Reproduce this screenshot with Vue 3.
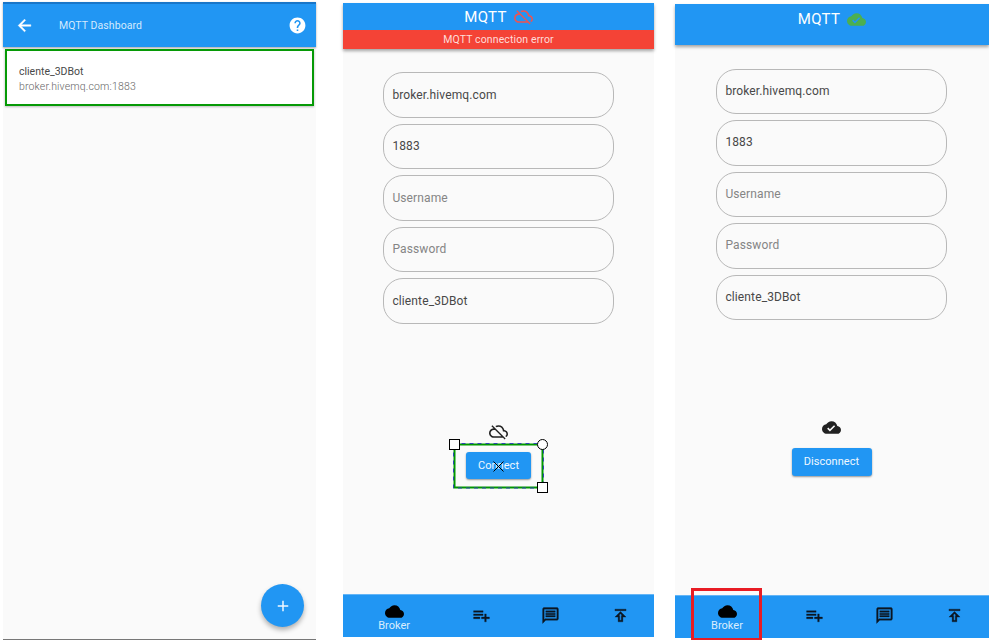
<script setup>
const cloud = 'M19.35 10.04C18.67 6.59 15.64 4 12 4 9.11 4 6.6 5.64 5.35 8.04 2.34 8.36 0 10.91 0 14c0 3.31 2.69 6 6 6h13c2.76 0 5-2.24 5-5 0-2.64-2.05-4.78-4.65-4.96z'
const icons = {
  back: 'M20 11H7.83l5.59-5.59L12 4l-8 8 8 8 1.41-1.41L7.83 13H20v-2z',
  help: 'M12 2C6.48 2 2 6.48 2 12s4.48 10 10 10 10-4.48 10-10S17.52 2 12 2zm1 17h-2v-2h2v2zm2.07-7.75l-.9.92C13.45 12.9 13 13.5 13 15h-2v-.5c0-1.1.45-2.1 1.17-2.83l1.24-1.26c.37-.36.59-.86.59-1.41 0-1.1-.9-2-2-2s-2 .9-2 2H8c0-2.21 1.79-4 4-4s4 1.79 4 4c0 .88-.36 1.68-.93 2.25z',
  add: 'M19 13h-6v6h-2v-6H5v-2h6V5h2v6h6v2z',
  cloud,
  cloudDone: cloud + 'M10 17l-3.5-3.5 1.41-1.41L10 14.17 15.18 9l1.41 1.41L10 17z',
  cloudOff: 'M19.35 10.04C18.67 6.59 15.64 4 12 4c-1.48 0-2.85.43-4.01 1.17l1.46 1.46C10.21 6.23 11.08 6 12 6c3.04 0 5.5 2.46 5.5 5.5v.5H19c1.66 0 3 1.34 3 3 0 1.13-.64 2.11-1.56 2.62l1.45 1.45C23.16 18.16 24 16.68 24 15c0-2.64-2.05-4.78-4.65-4.96zM3 5.27l2.75 2.74C2.56 8.15 0 10.77 0 14c0 3.31 2.69 6 6 6h11.73l2 2L21 20.73 4.27 4 3 5.27zM7.73 10l8 8H6c-2.21 0-4-1.79-4-4s1.79-4 4-4h1.73z',
  playlist: 'M14 10H2v2h12v-2zm0-4H2v2h12V6zm4 8v-4h-2v4h-4v2h4v4h2v-4h4v-2h-4zM2 16h8v-2H2v2z',
  message: 'M4 4h16v12H5.17L4 17.17V4m0-2c-1.1 0-1.99.9-1.99 2L2 22l4-4h14c1.1 0 2-.9 2-2V4c0-1.1-.9-2-2-2H4zm2 10h12v2H6v-2zm0-3h12v2H6V9zm0-3h12v2H6V6z',
  publish: 'M5 4h14v2H5V4zm0 10h4v6h6v-6h4l-7-7-7 7zm8-2v6h-2v-6H9.83L12 9.83 14.17 12H13z',
}
const fields = [
  { text: 'broker.hivemq.com', cls: 'host' },
  { text: '1883', cls: 'port' },
  { text: 'Username', cls: 'hint' },
  { text: 'Password', cls: 'hint' },
  { text: 'cliente_3DBot', cls: 'client' },
]
const phones = [
  { id: 'offline', icon: 'cloudOff', error: 'MQTT connection error', action: 'Connect' },
  { id: 'online', icon: 'cloudDone', error: '', action: 'Disconnect' },
]
const tabs = ['playlist', 'message', 'publish']
</script>

<template>
  <main class="board">
    <section class="phone list">
      <header class="topbar">
        <svg class="icon back" viewBox="0 0 24 24"><path :d="icons.back" /></svg>
        <span class="heading">MQTT Dashboard</span>
        <svg class="icon" viewBox="0 0 24 24"><path :d="icons.help" /></svg>
      </header>
      <article class="broker">
        <div class="name">cliente_3DBot</div>
        <div class="address">broker.hivemq.com:1883</div>
      </article>
      <button class="fab"><svg class="icon" viewBox="0 0 24 24"><path :d="icons.add" /></svg></button>
    </section>

    <section v-for="p in phones" :key="p.id" class="phone" :class="p.id">
      <header class="appbar">
        <div class="title">
          <span class="brand">MQTT</span>
          <svg class="icon status" viewBox="0 0 24 24"><path :d="icons[p.icon]" fill-rule="evenodd" /></svg>
        </div>
        <div v-if="p.error" class="error"><span>{{ p.error }}</span></div>
      </header>
      <div class="form">
        <div v-for="f in fields" :key="f.text" class="field"><span :class="f.cls">{{ f.text }}</span></div>
      </div>
      <div class="connection">
        <svg class="icon" viewBox="0 0 24 24"><path :d="icons[p.icon]" fill-rule="evenodd" /></svg>
        <div class="action">
          <button>{{ p.action }}</button>
          <svg v-if="p.id === 'offline'" class="selection" viewBox="0 0 100 56">
            <rect x="5.5" y="5.5" width="88" height="43" fill="none" stroke="#009600" stroke-width="2" />
            <rect x="4.5" y="4.5" width="90" height="44.5" fill="none" stroke="#3045b5" stroke-dasharray="4 4" />
            <rect x="0.5" y="0.5" width="10" height="10" fill="#fff" stroke="#000" />
            <circle cx="93.5" cy="5.5" r="5" fill="#fff" stroke="#000" />
            <rect x="88.5" y="43.5" width="10" height="10" fill="#fff" stroke="#000" />
            <path d="M44.5 22.5l10 10M54.5 22.5l-10 10" stroke="#000" fill="none" />
          </svg>
        </div>
      </div>
      <nav>
        <div class="tab current">
          <svg class="icon" viewBox="0 0 24 24"><path :d="icons.cloud" /></svg>
          <span>Broker</span>
        </div>
        <div v-for="t in tabs" :key="t" class="tab">
          <svg class="icon" viewBox="0 0 24 24"><path :d="icons[t]" /></svg>
        </div>
        <i v-if="p.id === 'online'" class="marker"></i>
      </nav>
    </section>
  </main>
</template>

<style>
body { margin: 0; background: #fff; overflow: hidden; }
</style>

<style scoped>
* { box-sizing: border-box; }
.board {
  display: flex;
  align-items: flex-start;
  width: 989px;
  height: 640px;
  padding-left: 3px;
  overflow: hidden;
  font-family: Roboto, "Liberation Sans", sans-serif;
  font-size: 12px;
  color: #484848;
}
.phone { position: relative; display: flex; flex-direction: column; flex: none; background: #fafafa; }
.icon { display: block; width: 19px; height: 19px; flex: none; fill: currentColor; }
button { border: 0; padding: 0; font: inherit; color: #f0f8ff; background: #2196f3; }

.list { width: 313px; height: 638px; margin-top: 2px; border-bottom: 1px solid #777; }
.topbar {
  display: flex;
  align-items: center;
  height: 45px;
  padding: 0 9px 0 12px;
  color: #fff;
  background: #2196f3;
  border-top: 2px solid #1976c8;
  box-shadow: 0 1px 2px rgba(0, 0, 0, .35);
}
.back { stroke: currentColor; stroke-width: .6; }
.heading { flex: 1; margin-left: 25px; font-size: 10.5px; letter-spacing: .08px; color: #d3eafd; }
.broker {
  position: relative;
  height: 57px;
  margin: 2px 2px 0;
  padding: 13px 12px;
  background: #fff;
  border: 2px solid #069a06;
  box-shadow: 0 1px 2px rgba(0, 0, 0, .25);
}
.name { font-size: 10.5px; line-height: 15px; }
.address { font-size: 10.5px; line-height: 15px; letter-spacing: .16px; font-weight: 300; color: #666; }
.fab {
  display: grid;
  place-items: center;
  width: 43px;
  height: 43px;
  margin: auto 12px 12px auto;
  border-radius: 50%;
  box-shadow: 0 3px 5px rgba(0, 0, 0, .3);
}
.fab .icon { width: 18px; height: 18px; }

.offline { width: 311px; height: 634px; margin: 3px 0 0 27px; }
.online { width: 314px; height: 634px; margin: 4px 0 0 21px; }
.appbar { color: #fff; background: #2196f3; box-shadow: 0 2px 3px rgba(0, 0, 0, .35); flex: none; }
.offline .appbar { height: 46px; }
.online .appbar { height: 41px; }
.title { display: flex; align-items: center; justify-content: center; gap: 7px; height: 27px; }
.online .title { height: 30px; }
.brand { font-size: 15px; letter-spacing: .3px; }
.offline .status { color: #ef5350; }
.online .status { color: #4caf50; }
.error {
  display: flex;
  align-items: center;
  justify-content: center;
  height: 19px;
  padding-bottom: 1px;
  font-size: 10.5px;
  letter-spacing: .12px;
  color: #ffdcd9;
  background: #f44336;
}
.form { display: flex; flex-direction: column; gap: 6px; width: 231px; margin: 23.4px 0 0 40px; }
.online .form { margin: 23.6px 0 0 41px; }
.field {
  display: flex;
  align-items: center;
  height: 45.5px;
  padding: 0 8.4px 1px;
  border: 1px solid #b8b8b8;
  border-radius: 20px;
}
.field span { letter-spacing: .12px; }
.field .hint { color: #858585; }
.connection { display: flex; flex-direction: column; align-items: center; margin-top: 98.5px; color: #212121; }
.online .connection { margin-top: 98px; padding-right: 1px; }
.action { position: relative; margin-top: 10.6px; }
.action button {
  display: block;
  width: 65px;
  height: 27px;
  border-radius: 3px;
  font-size: 11px;
  letter-spacing: .05px;
  box-shadow: 0 1px 2px rgba(0, 0, 0, .4);
}
.online .action button { width: 80px; height: 28px; }
.selection { position: absolute; left: -17px; top: -13px; width: 100px; height: 56px; }
nav { position: relative; display: flex; height: 43px; margin-top: auto; background: #2196f3; color: #0c1722; border-top: 1px solid #64b5f6; }
.tab { display: flex; flex-direction: column; align-items: center; justify-content: center; width: 70px; padding: 0 0 2px 2px; }
.tab .icon { stroke: currentColor; stroke-width: .4; }
.online .tab { padding-bottom: 3px; }
.tab.current { width: 103px; padding: 0; color: #000; }
.tab.current span { font-size: 11px; line-height: 13px; color: #d9edfd; }
.tab.current .icon { margin-bottom: -2px; stroke: none; }
.offline .tab.current { padding-top: 1px; }
.online .tab.current { padding: 0 0 1px 1px; }
.marker { position: absolute; left: 16px; top: -8px; width: 71px; height: 53px; border: 3px solid #e81c24; }
</style>
